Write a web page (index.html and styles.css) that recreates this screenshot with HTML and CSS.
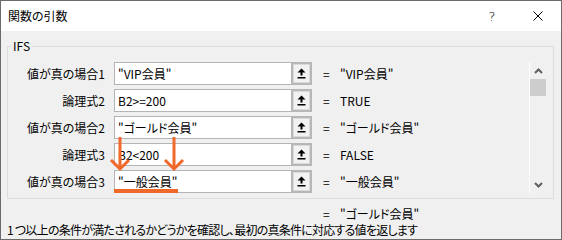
FILE: index.html
```html
<!DOCTYPE html>
<html lang="ja">
<head>
    <meta charset="UTF-8">
    <title>関数の引数</title>
    <link rel="stylesheet" href="styles.css">
</head>
<body>
    <div class="dialog">
        <div class="titlebar">
            <span class="title">関数の引数</span>
            <span class="caption-btn help">?</span>
            <span class="caption-btn close">
                <svg width="10" height="10" viewBox="0 0 10 10"><path d="M0.5 0.5 L9.5 9.5 M9.5 0.5 L0.5 9.5" stroke="#000" stroke-width="1"/></svg>
            </span>
        </div>

        <fieldset class="group">
            <legend>IFS</legend>
            <div class="args">
                <div class="rows">
                    <div class="row">
                        <label class="label">値が真の場合1</label>
                        <div class="field">"VIP会員"</div>
                        <span class="ref-btn"><svg width="9" height="11" viewBox="0 0 9 11"><path d="M4.5 0.5 L8.5 4.5 L5.5 4.5 L5.5 7.5 L3.5 7.5 L3.5 4.5 L0.5 4.5 Z" fill="#000"/><rect x="0.5" y="9" width="8" height="1.5" fill="#000"/></svg></span>
                        <span class="eq">=</span>
                        <span class="value">"VIP会員"</span>
                    </div>
                    <div class="row">
                        <label class="label">論理式2</label>
                        <div class="field">B2&gt;=200</div>
                        <span class="ref-btn"><svg width="9" height="11" viewBox="0 0 9 11"><path d="M4.5 0.5 L8.5 4.5 L5.5 4.5 L5.5 7.5 L3.5 7.5 L3.5 4.5 L0.5 4.5 Z" fill="#000"/><rect x="0.5" y="9" width="8" height="1.5" fill="#000"/></svg></span>
                        <span class="eq">=</span>
                        <span class="value">TRUE</span>
                    </div>
                    <div class="row">
                        <label class="label">値が真の場合2</label>
                        <div class="field">"ゴールド会員"</div>
                        <span class="ref-btn"><svg width="9" height="11" viewBox="0 0 9 11"><path d="M4.5 0.5 L8.5 4.5 L5.5 4.5 L5.5 7.5 L3.5 7.5 L3.5 4.5 L0.5 4.5 Z" fill="#000"/><rect x="0.5" y="9" width="8" height="1.5" fill="#000"/></svg></span>
                        <span class="eq">=</span>
                        <span class="value">"ゴールド会員"</span>
                    </div>
                    <div class="row">
                        <label class="label">論理式3</label>
                        <div class="field">B2&lt;200</div>
                        <span class="ref-btn"><svg width="9" height="11" viewBox="0 0 9 11"><path d="M4.5 0.5 L8.5 4.5 L5.5 4.5 L5.5 7.5 L3.5 7.5 L3.5 4.5 L0.5 4.5 Z" fill="#000"/><rect x="0.5" y="9" width="8" height="1.5" fill="#000"/></svg></span>
                        <span class="eq">=</span>
                        <span class="value">FALSE</span>
                    </div>
                    <div class="row">
                        <label class="label">値が真の場合3</label>
                        <div class="field">"一般会員"</div>
                        <span class="ref-btn"><svg width="9" height="11" viewBox="0 0 9 11"><path d="M4.5 0.5 L8.5 4.5 L5.5 4.5 L5.5 7.5 L3.5 7.5 L3.5 4.5 L0.5 4.5 Z" fill="#000"/><rect x="0.5" y="9" width="8" height="1.5" fill="#000"/></svg></span>
                        <span class="eq">=</span>
                        <span class="value">"一般会員"</span>
                    </div>
                </div>

                <!-- vertical scrollbar of the argument list -->
                <div class="scrollbar">
                    <span class="sb-arrow"><svg width="9" height="6" viewBox="0 0 9 6"><path d="M1 5 L4.5 1.5 L8 5" fill="none" stroke="#606060" stroke-width="2"/></svg></span>
                    <span class="sb-thumb"></span>
                    <span class="sb-track"></span>
                    <span class="sb-arrow"><svg width="9" height="6" viewBox="0 0 9 6"><path d="M1 1 L4.5 4.5 L8 1" fill="none" stroke="#606060" stroke-width="2"/></svg></span>
                </div>
            </div>
        </fieldset>

        <div class="footer">
            <div class="result"><span class="eq">=</span><span class="value">"ゴールド会員"</span></div>
            <p class="desc">1 つ以上の条件が満たされるかどうかを確認し、最初の真条件に対応する値を返します</p>
        </div>

        <!-- orange annotation drawn over the dialog -->
        <svg class="marks" width="562" height="240" viewBox="0 0 562 240">
            <g fill="none" stroke="#f0692a" stroke-width="3">
                <path d="M120 137 L120 168"/>
                <path d="M111 160 L120 169 L129 160"/>
                <path d="M174 137 L174 168"/>
                <path d="M165 160 L174 169 L183 160"/>
            </g>
            <rect x="114" y="189" width="64" height="4" fill="#f0692a"/>
        </svg>
    </div>
</body>
</html>
```

FILE: styles.css
```css
* {
    margin: 0;
    padding: 0;
    box-sizing: border-box;
}

body {
    background: #ffffff;
    font-family: "Noto Sans CJK JP", sans-serif;
    font-size: 12px;
    color: #000000;
    font-feature-settings: "palt";
}

.dialog {
    position: relative;
    width: 562px;
    height: 240px;
    border: 1px solid #6b6b6b;
    background: #f0f0f0;
}

/* Title bar */
.titlebar {
    height: 30px;
    background: #ffffff;
    display: flex;
    align-items: center;
}

.title {
    flex: 1;
    padding-left: 7px;
    padding-bottom: 1px;
}

.caption-btn {
    width: 46px;
    height: 30px;
    display: flex;
    align-items: center;
    justify-content: center;
}

.help {
    font-size: 13px;
    font-family: "DejaVu Sans", sans-serif;
    font-weight: 300;
}

/* IFS group */
.group {
    margin: 7px 7px 0 6px;
    border: 1px solid #dcdcdc;
    padding: 8px 7px 5px 3px;
    min-width: 0;
}

.group legend {
    padding: 0 2px;
    line-height: 16px;
}

.args {
    display: flex;
}

.rows {
    flex: 1;
    display: flex;
    flex-direction: column;
    gap: 4px;
}

.row {
    display: flex;
    align-items: center;
    height: 23px;
    white-space: nowrap;
}

.label {
    width: 94px;
    margin-right: 9px;
    text-align: right;
}

.field {
    width: 177px;
    height: 23px;
    background: #ffffff;
    border: 1px solid #b4b4b4;
    border-right: none;
    padding-left: 3px;
    line-height: 21px;
}

.ref-btn {
    width: 21px;
    height: 23px;
    border: 2px solid #b7b7b7;
    background: #f2f2f2;
    box-shadow: inset 0 0 0 1px #dadada;
    display: flex;
    align-items: center;
    justify-content: center;
}

.eq {
    width: 17px;
}

.row .eq {
    margin-left: 11px;
}

/* Scrollbar */
.scrollbar {
    width: 17px;
    border-left: 1px solid #ffffff;
    display: flex;
    flex-direction: column;
}

.sb-arrow {
    height: 17px;
    display: flex;
    align-items: center;
    justify-content: center;
}

.sb-thumb {
    height: 17px;
    background: #cdcdcd;
}

.sb-track {
    flex: 1;
}

/* Result and description */
.footer {
    padding-left: 6px;
}

.result {
    display: flex;
    margin-top: 7px;
    padding-left: 316px;
    line-height: 16px;
}

.desc {
    line-height: 16px;
    white-space: nowrap;
    letter-spacing: -0.75px;
}

.marks {
    position: absolute;
    left: -1px;
    top: -1px;
    pointer-events: none;
}
```
